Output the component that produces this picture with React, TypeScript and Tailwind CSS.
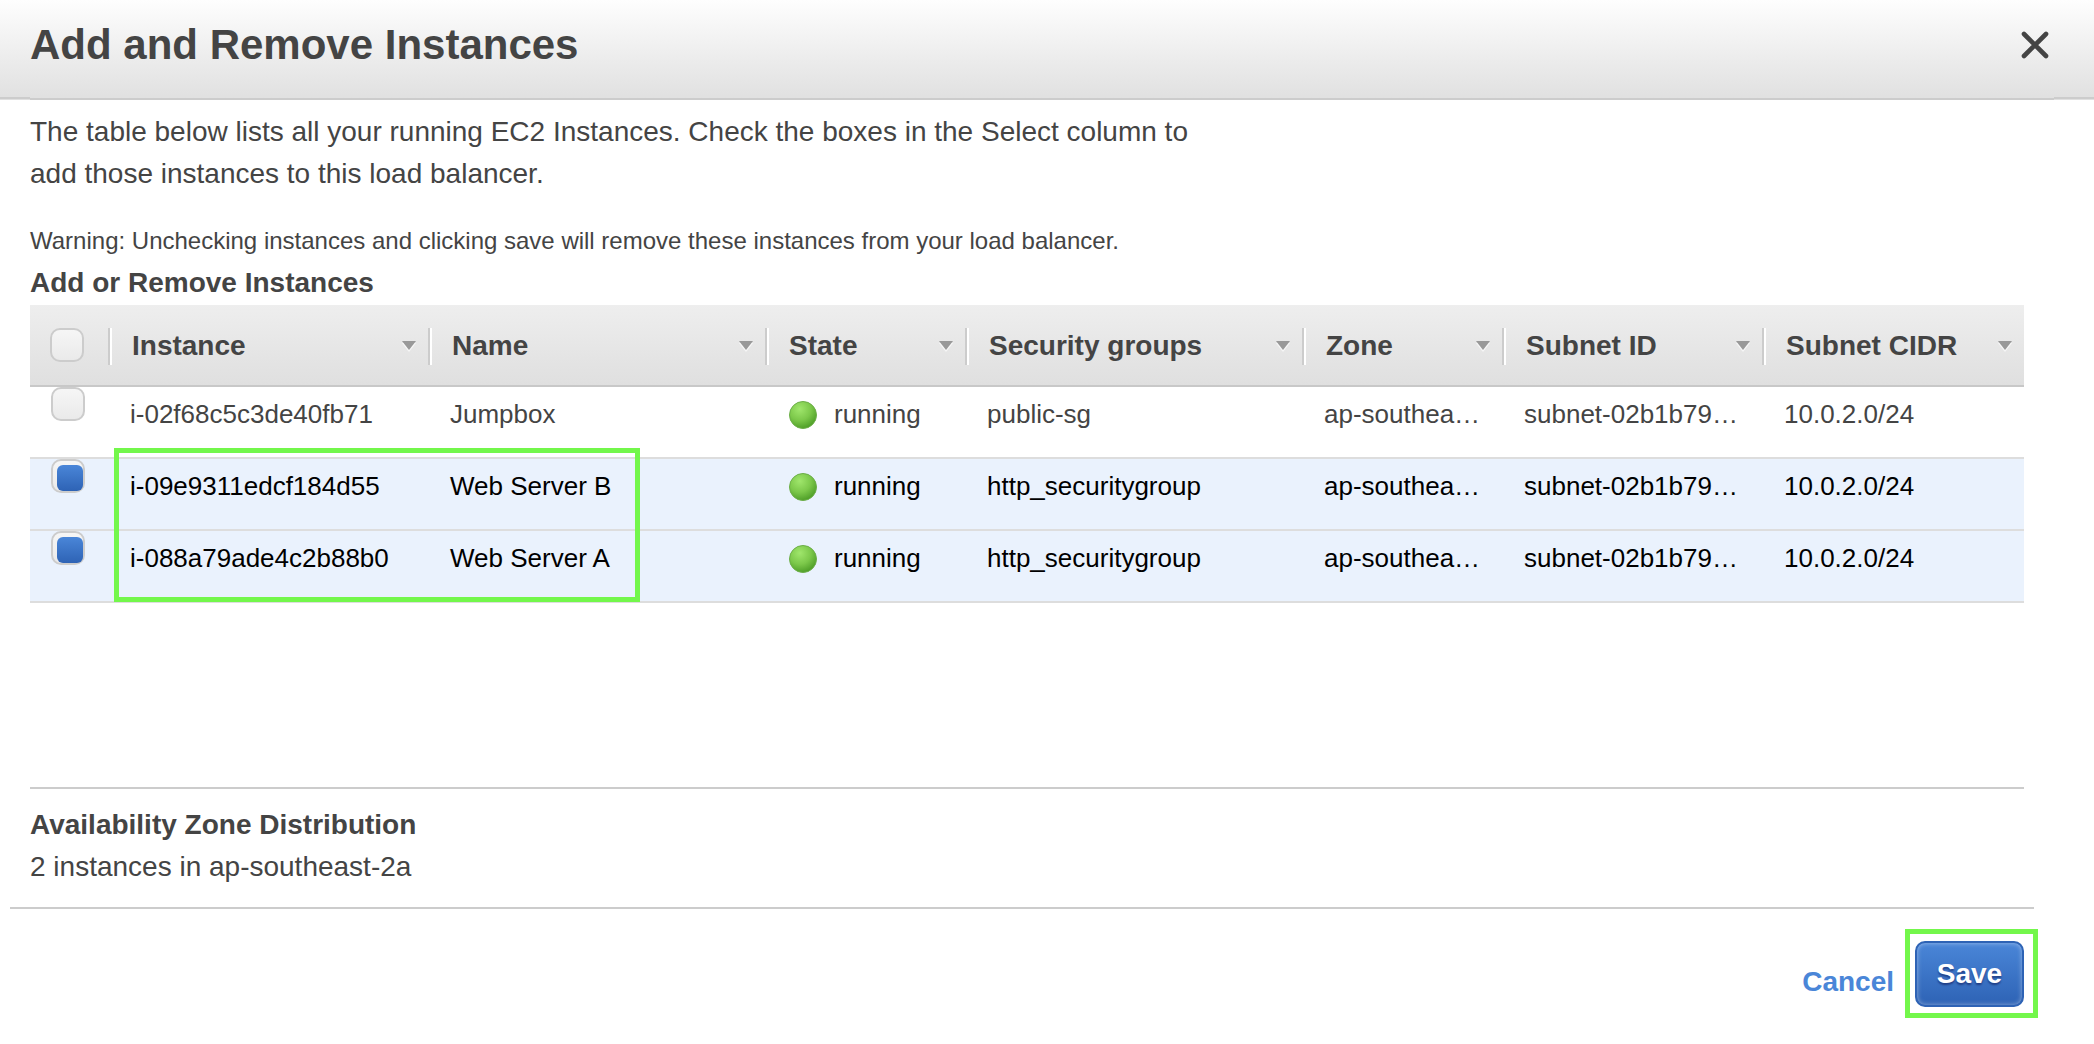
import React from "react";

type Instance = {
  id: string;
  name: string;
  state: string;
  group: string;
  zone: string;
  subnet: string;
  cidr: string;
  selected: boolean;
};

const instances: Instance[] = [
  {
    id: "i-02f68c5c3de40fb71",
    name: "Jumpbox",
    state: "running",
    group: "public-sg",
    zone: "ap-southea…",
    subnet: "subnet-02b1b79…",
    cidr: "10.0.2.0/24",
    selected: false,
  },
  {
    id: "i-09e9311edcf184d55",
    name: "Web Server B",
    state: "running",
    group: "http_securitygroup",
    zone: "ap-southea…",
    subnet: "subnet-02b1b79…",
    cidr: "10.0.2.0/24",
    selected: true,
  },
  {
    id: "i-088a79ade4c2b88b0",
    name: "Web Server A",
    state: "running",
    group: "http_securitygroup",
    zone: "ap-southea…",
    subnet: "subnet-02b1b79…",
    cidr: "10.0.2.0/24",
    selected: true,
  },
];

const columns = ["Instance", "Name", "State", "Security groups", "Zone", "Subnet ID", "Subnet CIDR"];

function CheckBox({ label, checked = false }: { label: string; checked?: boolean }) {
  return (
    <input
      type="checkbox"
      aria-label={label}
      defaultChecked={checked}
      className="block h-[34px] w-[34px] appearance-none rounded-[10px] border-2 border-[#ccc] bg-linear-to-b from-[#f6f6f6] to-[#eaeaea] checked:before:mt-1 checked:before:ml-1 checked:before:block checked:before:h-[26px] checked:before:w-[26px] checked:before:rounded-md checked:before:bg-linear-to-b checked:before:from-[#4a86d8] checked:before:to-[#2e63b5] checked:before:content-['']"
    />
  );
}

function Divider() {
  return <span className="h-[37px] w-1 shrink-0 border-r-2 border-l-2 border-l-[#ccc] border-r-white" />;
}

function SortArrow() {
  return (
    <svg width="16" height="13" viewBox="0 0 16 13" className="shrink-0" aria-hidden="true">
      <path d="M1 3h14l-7 9z" fill="#f7f7f7" />
      <path d="M1 1h14l-7 9z" fill="#999" />
    </svg>
  );
}

function StatusDot() {
  return (
    <svg width="30" height="30" viewBox="0 0 30 30" className="shrink-0" aria-hidden="true">
      <defs>
        <radialGradient id="dot-fill" cx="0.38" cy="0.28" r="0.75">
          <stop offset="0" stopColor="#a0e66c" />
          <stop offset="0.55" stopColor="#7cc84a" />
          <stop offset="1" stopColor="#4c9c26" />
        </radialGradient>
      </defs>
      <circle cx="15" cy="15" r="13.5" fill="url(#dot-fill)" stroke="#6cae48" strokeWidth="1" />
    </svg>
  );
}

export default function App() {
  return (
    <div className="min-h-screen bg-white font-['Liberation_Sans',Arial,sans-serif] text-[28px] leading-[42px] text-[#444]">
      <header className="flex h-[100px] bg-linear-to-b from-[#fefefe] to-[#e0e0e0]">
        <div className="h-[99px] w-[30px] border-b-2 border-[#ccc]" />
        <div className="flex flex-1 items-start justify-between border-b-2 border-[#ccc] pt-[21px] pr-[5px]">
          <h1 className="text-[42px] leading-[48px] font-bold">Add and Remove Instances</h1>
          <button type="button" aria-label="Close" className="flex h-12 items-center text-[#444]">
            <svg width="28" height="28" viewBox="0 0 28 28" fill="none" stroke="currentColor" strokeWidth="4.6" strokeLinecap="round">
              <path d="M3 3l22 22M25 3L3 25" />
            </svg>
          </button>
        </div>
        <div className="h-[99px] w-10 border-b-2 border-[#ccc]" />
      </header>

      <main className="pr-[70px] pl-[30px]">
        <p className="max-w-[1200px] pt-[11px]">
          The table below lists all your running EC2 Instances. Check the boxes in the Select column to add those
          instances to this load balancer.
        </p>
        <p className="pt-7 text-[24px] leading-[36px]">
          Warning: Unchecking instances and clicking save will remove these instances from your load balancer.
        </p>
        <h2 className="pt-[3px] font-bold leading-[42px]">Add or Remove Instances</h2>

        <div className="relative mt-px">
          <table className="w-full table-fixed border-collapse text-left">
            <colgroup>
              <col className="w-[82px]" />
              <col className="w-[320px]" />
              <col className="w-[337px]" />
              <col className="w-[200px]" />
              <col className="w-[337px]" />
              <col className="w-[200px]" />
              <col className="w-[260px]" />
              <col />
            </colgroup>
            <thead className="bg-linear-to-b from-[#eee] to-[#dfdfdf]">
              <tr className="h-[82px] shadow-[inset_0_-2px_0_#c8c8c8]">
                <th className="p-0 font-normal">
                  <div className="flex items-start justify-between pl-5">
                    <CheckBox label="Select all instances" />
                    <Divider />
                  </div>
                </th>
                {columns.map((c, i) => (
                  <th key={c} className="p-0 font-bold">
                    <div className="flex items-center pl-5">
                      <span className="flex-1 whitespace-nowrap">{c}</span>
                      <SortArrow />
                      <span className="w-[11px] shrink-0" />
                      {i < columns.length - 1 && <Divider />}
                    </div>
                  </th>
                ))}
              </tr>
            </thead>
            <tbody className="text-[26px] leading-[39px]">
              {instances.map((r) => (
                <tr
                  key={r.id}
                  className={
                    r.selected
                      ? "h-[72px] bg-[#eaf2fd] text-black shadow-[inset_0_-2px_0_#ddd]"
                      : "h-[72px] shadow-[inset_0_-2px_0_#ddd]"
                  }
                >
                  <td className="p-0 pl-[21px] align-top">
                    <CheckBox label={"Select " + r.id} checked={r.selected} />
                  </td>
                  <td className="p-0 pt-2 pl-[18px] align-top whitespace-nowrap">{r.id}</td>
                  <td className="p-0 pt-2 pl-[18px] align-top whitespace-nowrap">{r.name}</td>
                  <td className="p-0 pt-2 pl-[19px] align-top">
                    <div className="flex items-center gap-4">
                      <StatusDot />
                      {r.state}
                    </div>
                  </td>
                  <td className="p-0 pt-2 pl-[18px] align-top whitespace-nowrap">{r.group}</td>
                  <td className="p-0 pt-2 pl-[18px] align-top whitespace-nowrap">{r.zone}</td>
                  <td className="p-0 pt-2 pl-[18px] align-top whitespace-nowrap">{r.subnet}</td>
                  <td className="p-0 pt-2 pl-[18px] align-top whitespace-nowrap">{r.cidr}</td>
                </tr>
              ))}
            </tbody>
          </table>
          <div className="pointer-events-none absolute bottom-px left-[84px] h-[154px] w-[526px] border-5 border-[#73f74b]" />
        </div>

        <section className="mt-[184px] border-t-2 border-[#ccc] pt-[15px] pb-[19px]">
          <h2 className="font-bold">Availability Zone Distribution</h2>
          <p>2 instances in ap-southeast-2a</p>
        </section>
      </main>

      <footer className="mr-[60px] ml-[10px] border-t-2 border-[#ccc] pt-5">
        <div className="-mr-1 flex items-center justify-end gap-[11px]">
          <a href="#cancel" className="pt-4 font-bold text-[#4a86d8]">
            Cancel
          </a>
          <div className="border-5 border-[#73f74b] pt-[7px] pr-[9px] pb-[6px] pl-[5px]">
            <button
              type="button"
              className="block h-[66px] w-[109px] rounded-[10px] border-2 border-[#2e63b5] bg-linear-to-b from-[#4a86d8] to-[#2e63b5] font-bold text-white shadow-[inset_0_0_5px_rgba(255,255,255,0.45)] [text-shadow:0_2px_2px_rgba(0,0,60,0.45)]"
            >
              Save
            </button>
          </div>
        </div>
      </footer>
    </div>
  );
}
